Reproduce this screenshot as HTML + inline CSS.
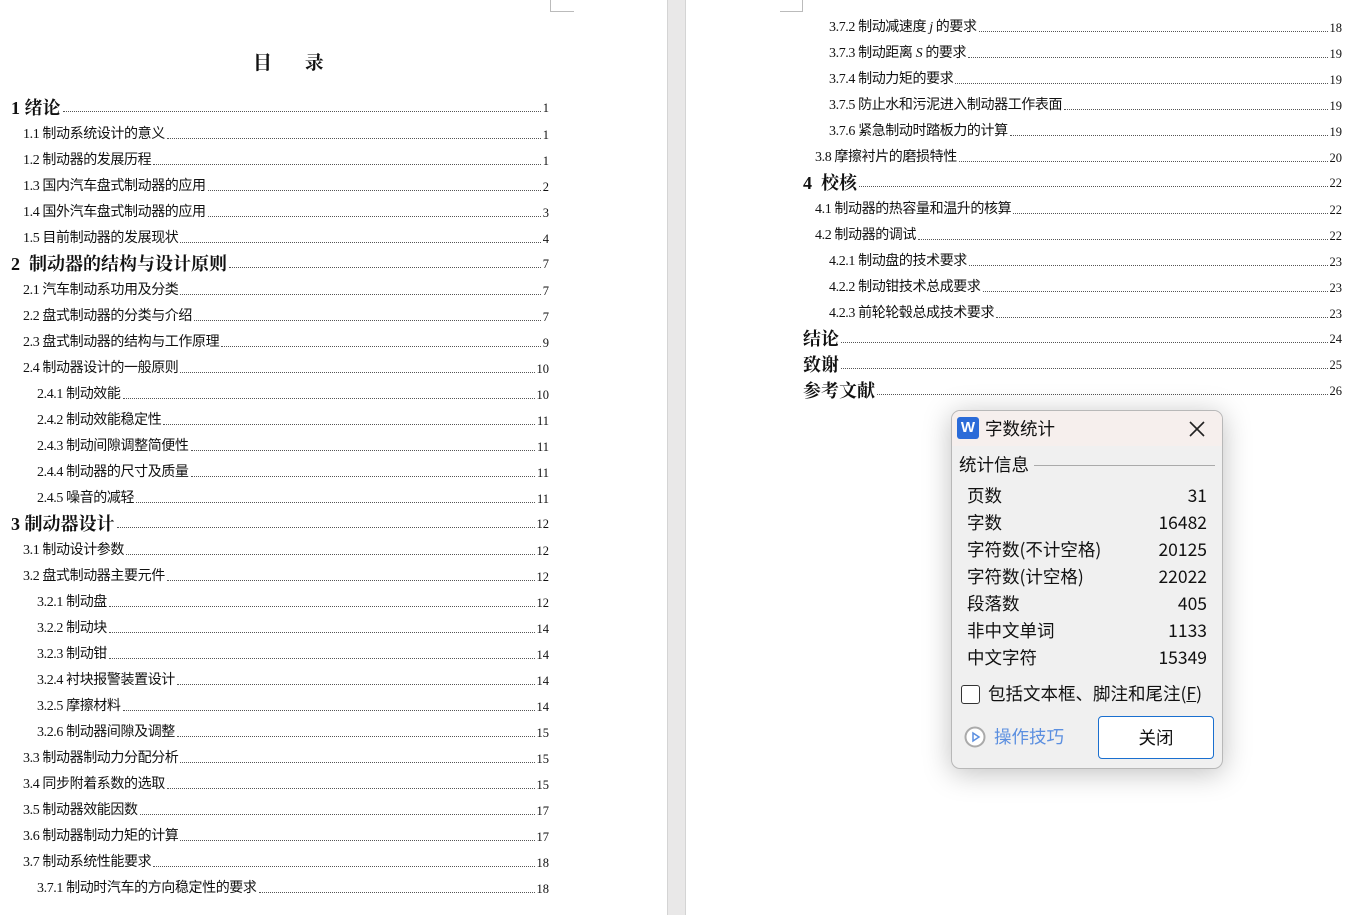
<!DOCTYPE html>
<html><head><meta charset="utf-8">
<style>
*{margin:0;padding:0;box-sizing:border-box}
body{width:1352px;height:915px;background:#fff;position:relative;overflow:hidden;font-family:"Liberation Serif","Noto Sans CJK SC",serif;color:#111}
.gap{position:absolute;left:667px;top:0;width:19px;height:915px;background:#e9e8e8;border-left:1px solid #d4d4d4;border-right:1px solid #d4d4d4}
.r{position:absolute;height:20px;display:flex;align-items:flex-end;font-size:14px;line-height:18px;white-space:nowrap;transform:translateY(2px)}
.r .t{font-family:"Liberation Serif","Noto Sans CJK SC",sans-serif;letter-spacing:-0.4px}
.r .d{flex:1;border-bottom:1px dotted #555;margin:0 2px 5px 2px}
.r .n{font-size:12.5px}
.r.b{transform:translateY(1px)}
.r.b .t{font-family:"Liberation Serif","Noto Serif CJK SC",serif;font-weight:bold;font-size:18px;letter-spacing:0}
.title{position:absolute;left:253px;top:48px;font-family:"Noto Serif CJK SC",serif;font-weight:bold;font-size:19px;letter-spacing:14px}
.dlg{position:absolute;left:951px;top:410px;width:272px;height:359px;background:#f0f0f0;border:1px solid #b8b8b8;border-radius:9px;box-shadow:0 4px 28px rgba(0,0,0,.25);font-family:"Noto Sans CJK SC",sans-serif;overflow:hidden}
.tb{height:35px;background:#f6efed;position:relative}
.wi{position:absolute;left:5px;top:6px;width:22px;height:22px;background:#2b6bd8;border-radius:3px;color:#fff;font:bold 15px "Liberation Sans",sans-serif;text-align:center;line-height:22px}
.tt{position:absolute;left:33px;top:5px;font-size:17.5px}
.x{position:absolute;left:236px;top:9px}
.row{position:absolute;left:15px;width:240px;font-size:17.5px;display:flex;justify-content:space-between;line-height:22px}
</style></head><body>
<div class="gap"></div>
<div style="position:absolute;left:550px;top:0;width:1px;height:11px;background:#bbb"></div>
<div style="position:absolute;left:550px;top:11px;width:24px;height:1px;background:#bbb"></div>
<div style="position:absolute;left:802px;top:0;width:1px;height:11px;background:#bbb"></div>
<div style="position:absolute;left:780px;top:11px;width:23px;height:1px;background:#bbb"></div>
<div class="title">目 录</div>

<div class="r b" style="left:11px;top:96px;width:538px"><span class="t">1 绪论</span><span class="d"></span><span class="n">1</span></div>
<div class="r" style="left:23px;top:122px;width:526px"><span class="t">1.1 制动系统设计的意义</span><span class="d"></span><span class="n">1</span></div>
<div class="r" style="left:23px;top:148px;width:526px"><span class="t">1.2 制动器的发展历程</span><span class="d"></span><span class="n">1</span></div>
<div class="r" style="left:23px;top:174px;width:526px"><span class="t">1.3 国内汽车盘式制动器的应用</span><span class="d"></span><span class="n">2</span></div>
<div class="r" style="left:23px;top:200px;width:526px"><span class="t">1.4 国外汽车盘式制动器的应用</span><span class="d"></span><span class="n">3</span></div>
<div class="r" style="left:23px;top:226px;width:526px"><span class="t">1.5 目前制动器的发展现状</span><span class="d"></span><span class="n">4</span></div>
<div class="r b" style="left:11px;top:252px;width:538px"><span class="t">2&nbsp; 制动器的结构与设计原则</span><span class="d"></span><span class="n">7</span></div>
<div class="r" style="left:23px;top:278px;width:526px"><span class="t">2.1 汽车制动系功用及分类</span><span class="d"></span><span class="n">7</span></div>
<div class="r" style="left:23px;top:304px;width:526px"><span class="t">2.2 盘式制动器的分类与介绍</span><span class="d"></span><span class="n">7</span></div>
<div class="r" style="left:23px;top:330px;width:526px"><span class="t">2.3 盘式制动器的结构与工作原理</span><span class="d"></span><span class="n">9</span></div>
<div class="r" style="left:23px;top:356px;width:526px"><span class="t">2.4 制动器设计的一般原则</span><span class="d"></span><span class="n">10</span></div>
<div class="r" style="left:37px;top:382px;width:512px"><span class="t">2.4.1 制动效能</span><span class="d"></span><span class="n">10</span></div>
<div class="r" style="left:37px;top:408px;width:512px"><span class="t">2.4.2 制动效能稳定性</span><span class="d"></span><span class="n">11</span></div>
<div class="r" style="left:37px;top:434px;width:512px"><span class="t">2.4.3 制动间隙调整简便性</span><span class="d"></span><span class="n">11</span></div>
<div class="r" style="left:37px;top:460px;width:512px"><span class="t">2.4.4 制动器的尺寸及质量</span><span class="d"></span><span class="n">11</span></div>
<div class="r" style="left:37px;top:486px;width:512px"><span class="t">2.4.5 噪音的减轻</span><span class="d"></span><span class="n">11</span></div>
<div class="r b" style="left:11px;top:512px;width:538px"><span class="t">3 制动器设计</span><span class="d"></span><span class="n">12</span></div>
<div class="r" style="left:23px;top:538px;width:526px"><span class="t">3.1 制动设计参数</span><span class="d"></span><span class="n">12</span></div>
<div class="r" style="left:23px;top:564px;width:526px"><span class="t">3.2 盘式制动器主要元件</span><span class="d"></span><span class="n">12</span></div>
<div class="r" style="left:37px;top:590px;width:512px"><span class="t">3.2.1 制动盘</span><span class="d"></span><span class="n">12</span></div>
<div class="r" style="left:37px;top:616px;width:512px"><span class="t">3.2.2 制动块</span><span class="d"></span><span class="n">14</span></div>
<div class="r" style="left:37px;top:642px;width:512px"><span class="t">3.2.3 制动钳</span><span class="d"></span><span class="n">14</span></div>
<div class="r" style="left:37px;top:668px;width:512px"><span class="t">3.2.4 衬块报警装置设计</span><span class="d"></span><span class="n">14</span></div>
<div class="r" style="left:37px;top:694px;width:512px"><span class="t">3.2.5 摩擦材料</span><span class="d"></span><span class="n">14</span></div>
<div class="r" style="left:37px;top:720px;width:512px"><span class="t">3.2.6 制动器间隙及调整</span><span class="d"></span><span class="n">15</span></div>
<div class="r" style="left:23px;top:746px;width:526px"><span class="t">3.3 制动器制动力分配分析</span><span class="d"></span><span class="n">15</span></div>
<div class="r" style="left:23px;top:772px;width:526px"><span class="t">3.4 同步附着系数的选取</span><span class="d"></span><span class="n">15</span></div>
<div class="r" style="left:23px;top:798px;width:526px"><span class="t">3.5 制动器效能因数</span><span class="d"></span><span class="n">17</span></div>
<div class="r" style="left:23px;top:824px;width:526px"><span class="t">3.6 制动器制动力矩的计算</span><span class="d"></span><span class="n">17</span></div>
<div class="r" style="left:23px;top:850px;width:526px"><span class="t">3.7 制动系统性能要求</span><span class="d"></span><span class="n">18</span></div>
<div class="r" style="left:37px;top:876px;width:512px"><span class="t">3.7.1 制动时汽车的方向稳定性的要求</span><span class="d"></span><span class="n">18</span></div>

<div class="r" style="left:829px;top:15px;width:513px"><span class="t">3.7.2 制动减速度 <i>j</i> 的要求</span><span class="d"></span><span class="n">18</span></div>
<div class="r" style="left:829px;top:41px;width:513px"><span class="t">3.7.3 制动距离 <i>S</i> 的要求</span><span class="d"></span><span class="n">19</span></div>
<div class="r" style="left:829px;top:67px;width:513px"><span class="t">3.7.4 制动力矩的要求</span><span class="d"></span><span class="n">19</span></div>
<div class="r" style="left:829px;top:93px;width:513px"><span class="t">3.7.5 防止水和污泥进入制动器工作表面</span><span class="d"></span><span class="n">19</span></div>
<div class="r" style="left:829px;top:119px;width:513px"><span class="t">3.7.6 紧急制动时踏板力的计算</span><span class="d"></span><span class="n">19</span></div>
<div class="r" style="left:815px;top:145px;width:527px"><span class="t">3.8 摩擦衬片的磨损特性</span><span class="d"></span><span class="n">20</span></div>
<div class="r b" style="left:803px;top:171px;width:539px"><span class="t">4&nbsp; 校核</span><span class="d"></span><span class="n">22</span></div>
<div class="r" style="left:815px;top:197px;width:527px"><span class="t">4.1 制动器的热容量和温升的核算</span><span class="d"></span><span class="n">22</span></div>
<div class="r" style="left:815px;top:223px;width:527px"><span class="t">4.2 制动器的调试</span><span class="d"></span><span class="n">22</span></div>
<div class="r" style="left:829px;top:249px;width:513px"><span class="t">4.2.1 制动盘的技术要求</span><span class="d"></span><span class="n">23</span></div>
<div class="r" style="left:829px;top:275px;width:513px"><span class="t">4.2.2 制动钳技术总成要求</span><span class="d"></span><span class="n">23</span></div>
<div class="r" style="left:829px;top:301px;width:513px"><span class="t">4.2.3 前轮轮毂总成技术要求</span><span class="d"></span><span class="n">23</span></div>
<div class="r b" style="left:803px;top:327px;width:539px"><span class="t">结论</span><span class="d"></span><span class="n">24</span></div>
<div class="r b" style="left:803px;top:353px;width:539px"><span class="t">致谢</span><span class="d"></span><span class="n">25</span></div>
<div class="r b" style="left:803px;top:379px;width:539px"><span class="t">参考文献</span><span class="d"></span><span class="n">26</span></div>

<div class="dlg">
  <div class="tb"><div class="wi">W</div><div class="tt">字数统计</div>
  <svg class="x" width="18" height="18" viewBox="0 0 18 18"><path d="M2 2L16 16M16 2L2 16" stroke="#222" stroke-width="1.6"/></svg></div>
  <div style="position:absolute;left:7px;top:43px;font-size:17.5px;line-height:22px">统计信息</div>
  <div style="position:absolute;left:82px;top:54px;width:181px;height:1px;background:#aaa"></div>
  <div class="row" style="top:74px"><span>页数</span><span>31</span></div>
  <div class="row" style="top:101px"><span>字数</span><span>16482</span></div>
  <div class="row" style="top:128px"><span>字符数(不计空格)</span><span>20125</span></div>
  <div class="row" style="top:155px"><span>字符数(计空格)</span><span>22022</span></div>
  <div class="row" style="top:182px"><span>段落数</span><span>405</span></div>
  <div class="row" style="top:209px"><span>非中文单词</span><span>1133</span></div>
  <div class="row" style="top:236px"><span>中文字符</span><span>15349</span></div>
  <div style="position:absolute;left:9px;top:274px;width:19px;height:19px;border:1px solid #333;border-radius:3px;background:#fff"></div>
  <div style="position:absolute;left:36px;top:272px;font-size:17.5px;line-height:22px">包括文本框、脚注和尾注(<u>F</u>)</div>
  <svg style="position:absolute;left:12px;top:315px" width="22" height="22" viewBox="0 0 22 22"><circle cx="11" cy="11" r="9.5" fill="#fff" stroke="#aaa" stroke-width="2"/><path d="M9 7L15 11L9 15Z" fill="none" stroke="#5b8fe0" stroke-width="1.5"/></svg>
  <div style="position:absolute;left:42px;top:315px;font-size:17.5px;line-height:22px;color:#5b8fe0">操作技巧</div>
  <div style="position:absolute;left:146px;top:305px;width:116px;height:43px;border:1px solid #1a6fcf;border-radius:4px;background:#fff;font-size:17.5px;text-align:center;line-height:41px">关闭</div>
</div>
</body></html>
